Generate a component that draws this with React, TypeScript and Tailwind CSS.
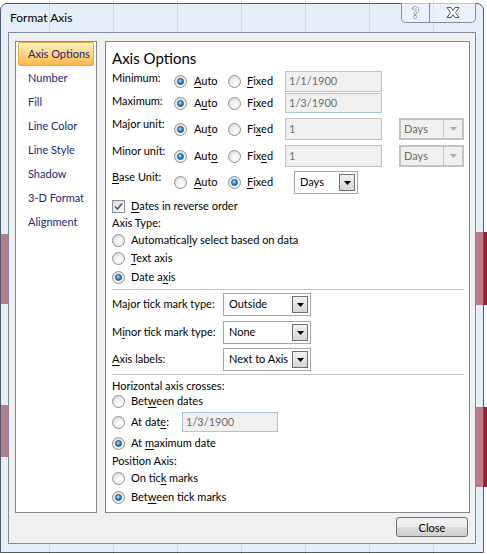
/**
 * Format Axis dialog (Windows 7 / Office 2007 style)
 */

import type { ReactNode } from 'react'

function U({ children }: { children: ReactNode }) {
  return <span className="underline underline-offset-[2px] decoration-[1px]">{children}</span>
}

// Radio button
function Radio({ checked = false }: { checked?: boolean }) {
  return (
    <span className="flex h-[13px] w-[13px] shrink-0 items-center justify-center rounded-full border border-[#8e8f8f] bg-[radial-gradient(circle_at_60%_65%,#ffffff_0,#f1f1f1_40%,#cfcfcf_100%)]">
      {checked && (
        <span className="h-[7px] w-[7px] rounded-full border border-[#174f87] bg-[radial-gradient(circle_at_40%_35%,#bfeaff_0,#3e9be0_40%,#0b4c8e_100%)]" />
      )}
    </span>
  )
}

function Checkbox() {
  return (
    <span className="flex h-[13px] w-[13px] shrink-0 items-center justify-center border border-[#8e8f8f] bg-gradient-to-br from-[#dcdcdc] to-[#fbfbfb]">
      <svg width="9" height="9" viewBox="0 0 9 9">
        <path d="M1 4.5 L3.5 7 L8 1.5" fill="none" stroke="#4a5c8c" strokeWidth="1.7" />
      </svg>
    </span>
  )
}

function Arrow({ color = '#000' }: { color?: string }) {
  return (
    <svg width="7" height="4" viewBox="0 0 7 4">
      <path d="M0 0 H7 L3.5 4 Z" fill={color} />
    </svg>
  )
}

function TextBox({ value, className }: { value: string; className: string }) {
  return (
    <div className={className}>
      <span className="pl-[3px] text-[#6d6d6d]">{value}</span>
    </div>
  )
}

// Enabled combo box
function Combo({ value, className }: { value: string; className: string }) {
  return (
    <div className={className}>
      <span className="flex-1 pl-[5px]">{value}</span>
      <span className="mr-[2px] flex h-[calc(100%-4px)] w-[16px] items-center justify-center border border-[#707070] bg-gradient-to-b from-[#f2f2f2] to-[#d4d4d4]">
        <Arrow />
      </span>
    </div>
  )
}

// Disabled combo box
function DisabledCombo({ value }: { value: string }) {
  return (
    <div className="flex h-full w-[65px] items-center border-2 border-[#c2c2c2] bg-[#f0f0f0]">
      <span className="flex-1 pl-[3px] text-[#6d6d6d]">{value}</span>
      <span className="flex h-full w-[19px] items-center justify-center border-l border-[#c8c8c8]">
        <Arrow color="#a8a8a8" />
      </span>
    </div>
  )
}

const navItems = ['Number', 'Fill', 'Line Color', 'Line Style', 'Shadow', '3-D Format', 'Alignment']

export default function App() {
  return (
    <div className="relative h-[554px] w-[487px] overflow-hidden whitespace-nowrap bg-white bg-[repeating-linear-gradient(90deg,transparent_0,transparent_49px,#d4dae3_49px,#d4dae3_50px,transparent_50px,transparent_64px)] font-[Lato,sans-serif] text-[11px] text-black">
      {/* chart bars behind the glass frame */}
      <div className="absolute left-0 top-[234px] h-[70px] w-[12px] bg-[#a01c28]" />
      <div className="absolute left-0 top-[405px] h-[52px] w-[12px] bg-[#a01c28]" />
      <div className="absolute right-0 top-[232px] h-[73px] w-[14px] bg-[#a01c28]" />
      <div className="absolute right-0 top-[407px] h-[80px] w-[14px] bg-[#a01c28]" />

      {/* Window */}
      <div className="absolute left-0 top-[3px] flex h-[550px] w-[484px] flex-col rounded-t-[7px] border border-[#4f5d70] bg-[rgba(205,222,240,0.5)]">
        {/* Title bar */}
        <div className="relative flex h-[28px] items-center pl-[9px] text-[12px]">
          <span>Format Axis</span>
          <div className="absolute right-[7px] top-[-1px] flex h-[20px]">
            <div className="flex w-[29px] items-center justify-center rounded-bl-[5px] border border-t-0 border-[#7d8ca0] bg-[rgba(235,242,250,0.7)]">
              <span className="text-[15px] font-bold leading-none text-white [-webkit-text-stroke:1px_#4d5666] [paint-order:stroke_fill]">?</span>
            </div>
            <div className="flex w-[46px] items-center justify-center rounded-br-[5px] border border-l-0 border-t-0 border-[#7d8ca0] bg-[rgba(235,242,250,0.7)]">
              <svg width="16" height="13" viewBox="0 0 16 13">
                <path d="M2 1.5 H6 L8 4.5 L10 1.5 H14 L10.5 6.5 L14 11.5 H10 L8 8.5 L6 11.5 H2 L5.5 6.5 Z" fill="#fff" stroke="#4d5666" strokeWidth="1" strokeLinejoin="round" />
              </svg>
            </div>
          </div>
        </div>

        {/* Client area */}
        <div className="ml-[7px] flex h-[512px] w-[468px] flex-col border border-[#7e8b9c] bg-[#f0f0f0]">
          <div className="ml-[6px] mt-[8px] flex gap-[8px]">
            {/* Nav list */}
            <div className="h-[472px] w-[82px] border border-[#828790] bg-white">
              <div className="ml-[2px] flex h-[24px] w-[76px] items-center rounded-[2px] border border-[#e9a94a] bg-gradient-to-b from-[#fff0c0] via-[#fdd47f] to-[#fbb74a] pl-[9px] text-[#1b2580]">
                Axis Options
              </div>
              {navItems.map((item) => (
                <div key={item} className="flex h-[24px] items-center pl-[12px] text-[#1b2580]">
                  {item}
                </div>
              ))}
            </div>

            {/* Options panel */}
            <div className="flex h-[472px] w-[365px] flex-col border border-[#828790] bg-white pl-[6px]">
              <div className="h-[29px] pt-[5px] text-[15px] leading-[22px]">Axis Options</div>

              {/* Minimum */}
              <div className="flex h-[21px] items-center">
                <span className="-mt-[7px] w-[62px]">Minimum:</span>
                <div className="flex w-[54px] items-center gap-[7px]"><Radio checked /><span><U>A</U>uto</span></div>
                <div className="flex w-[57px] items-center gap-[6px]"><Radio /><span><U>F</U>ixed</span></div>
                <TextBox value="1/1/1900" className="flex h-full w-[97px] items-center border border-[#a9c5e2] bg-[#f0f0f0]" />
              </div>
              {/* Maximum */}
              <div className="mt-[1px] flex h-[20px] items-center">
                <span className="-mt-[3px] w-[62px]">Maximum:</span>
                <div className="flex w-[54px] items-center gap-[7px]"><Radio checked /><span>A<U>u</U>to</span></div>
                <div className="flex w-[57px] items-center gap-[6px]"><Radio /><span>F<U>i</U>xed</span></div>
                <TextBox value="1/3/1900" className="flex h-full w-[97px] items-center border border-[#a9c5e2] bg-[#f0f0f0]" />
              </div>
              {/* Major unit */}
              <div className="mt-[5px] flex h-[22px] items-center">
                <span className="-mt-[10px] w-[62px]">Major unit:</span>
                <div className="flex w-[54px] items-center gap-[7px]"><Radio checked /><span>Au<U>t</U>o</span></div>
                <div className="flex w-[57px] items-center gap-[6px]"><Radio /><span>Fi<U>x</U>ed</span></div>
                <TextBox value="1" className="flex h-full w-[97px] items-center border border-[#c2c2c2] bg-[#f0f0f0]" />
                <div className="ml-[17px] h-full"><DisabledCombo value="Days" /></div>
              </div>
              {/* Minor unit */}
              <div className="mt-[5px] flex h-[22px] items-center">
                <span className="-mt-[10px] w-[62px]">Minor unit:</span>
                <div className="flex w-[54px] items-center gap-[7px]"><Radio checked /><span>Aut<U>o</U></span></div>
                <div className="flex w-[57px] items-center gap-[6px]"><Radio /><span>Fix<U>e</U>d</span></div>
                <TextBox value="1" className="flex h-full w-[97px] items-center border border-[#c2c2c2] bg-[#f0f0f0]" />
                <div className="ml-[17px] h-full"><DisabledCombo value="Days" /></div>
              </div>
              {/* Base unit */}
              <div className="mt-[4px] flex h-[23px] items-center">
                <span className="-mt-[10px] w-[62px]"><U>B</U>ase Unit:</span>
                <div className="flex w-[54px] items-center gap-[7px]"><Radio /><span><U>A</U>uto</span></div>
                <div className="flex w-[66px] items-center gap-[6px]"><Radio checked /><span><U>F</U>ixed</span></div>
                <Combo value="Days" className="flex h-full w-[64px] items-center border border-[#a5a5a5] bg-white" />
              </div>

              <div className="mt-[3px] flex h-[18px] items-center gap-[6px]">
                <Checkbox />
                <span><U>D</U>ates in reverse order</span>
              </div>
              <div className="flex h-[16px] items-center">Axis Type:</div>
              <div className="flex h-[18px] items-center gap-[6px]">
                <Radio /><span>Automatical<U>l</U>y select based on data</span>
              </div>
              <div className="flex h-[18px] items-center gap-[6px]">
                <Radio /><span><U>T</U>ext axis</span>
              </div>
              <div className="flex h-[20px] items-center gap-[6px]">
                <Radio checked /><span>Date a<U>x</U>is</span>
              </div>

              <div className="mr-[5px] mt-[2px] h-px bg-[#c5c5c5]" />

              <div className="mt-[3px] flex h-[23px] items-center">
                <span className="w-[111px]">Major tick mark type:</span>
                <Combo value="Outside" className="flex h-full w-[88px] items-center border border-[#a5a5a5] bg-white" />
              </div>
              <div className="mt-[5px] flex h-[23px] items-center">
                <span className="w-[111px]">M<U>i</U>nor tick mark type:</span>
                <Combo value="None" className="flex h-full w-[88px] items-center border border-[#a5a5a5] bg-white" />
              </div>
              <div className="mt-[4px] flex h-[23px] items-center">
                <span className="w-[111px]"><U>A</U>xis labels:</span>
                <Combo value="Next to Axis" className="flex h-full w-[88px] items-center border border-[#a5a5a5] bg-white" />
              </div>

              <div className="mr-[5px] mt-[3px] h-px bg-[#c5c5c5]" />

              <div className="mt-[3px] flex h-[16px] items-center">Horizontal axis crosses:</div>
              <div className="flex h-[14px] items-center gap-[6px]">
                <Radio /><span>Bet<U>w</U>een dates</span>
              </div>
              <div className="flex h-[28px] items-center gap-[6px]">
                <Radio /><span className="w-[45px]">At dat<U>e</U>:</span>
                <TextBox value="1/3/1900" className="flex h-[20px] w-[96px] items-center border border-[#a9c5e2] bg-[#f0f0f0]" />
              </div>
              <div className="flex h-[14px] items-center gap-[6px]">
                <Radio checked /><span>At <U>m</U>aximum date</span>
              </div>
              <div className="mt-[2px] flex h-[18px] items-center">Position Axis:</div>
              <div className="flex h-[16px] items-center gap-[6px]">
                <Radio /><span>On tic<U>k</U> marks</span>
              </div>
              <div className="flex h-[22px] items-center gap-[6px]">
                <Radio checked /><span>Bet<U>w</U>een tick marks</span>
              </div>
            </div>
          </div>

          <div className="mt-[4px] flex justify-end pr-[7px]">
            <button className="h-[20px] w-[72px] rounded-[3px] border border-[#707070] bg-[linear-gradient(#f2f2f2_0,#ebebeb_50%,#dddddd_50%,#cfcfcf_100%)] text-[11px] leading-none">
              Close
            </button>
          </div>
        </div>
      </div>
    </div>
  )
}
